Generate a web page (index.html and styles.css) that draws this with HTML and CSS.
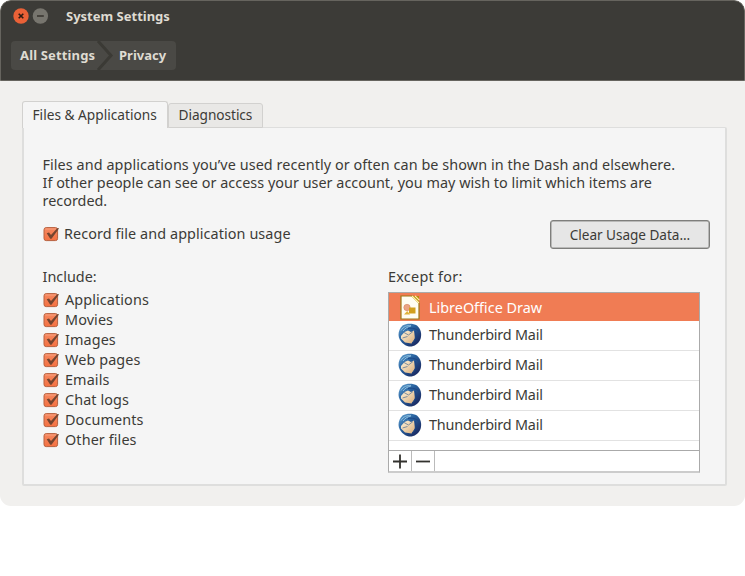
FILE: index.html
```html
<!DOCTYPE html>
<html lang="en">
<head>
<meta charset="utf-8">
<title>System Settings</title>
<link rel="stylesheet" href="styles.css">
</head>
<body>
<svg class="defs" aria-hidden="true">
  <defs>
    <linearGradient id="box" x1="0" y1="0" x2="0" y2="1"><stop offset="0" stop-color="#f58860"/><stop offset="1" stop-color="#f47142"/></linearGradient>
    <linearGradient id="globe" x1="0" y1="0" x2="1" y2="1"><stop offset="0" stop-color="#6aa9d6"/><stop offset=".4" stop-color="#27619f"/><stop offset="1" stop-color="#171b50"/></linearGradient>
    <linearGradient id="mail" x1="0" y1="0" x2="1" y2="1"><stop offset="0" stop-color="#fff3d8"/><stop offset="1" stop-color="#d9ae7c"/></linearGradient>
    <symbol id="check" viewBox="0 0 17 16">
      <rect x="1" y="1.6" width="13.6" height="13" rx="2.2" fill="url(#box)" stroke="#b7613f"/>
      <path d="M2.2 3h11.2" stroke="#f9a587" stroke-width=".8"/>
      <path d="M3.7 7.3 6 6.4l2 2.7 6.2-6.8 2-.1-7.7 10.5-1.3.1z" fill="#74442f"/>
    </symbol>
    <symbol id="bird" viewBox="0 0 24 24">
      <path d="M4.500 2.500C9 0 15 .2 19 2.500c4 3.500 5 8.500 3.500 13.500-2 5-7 8-11.500 7.500C6 22.500 1 18 .5 12 .5 8 2 5 4.500 2.500z" fill="url(#globe)"/>
      <path d="M3 13 6.500 9l3.500-1.500 3 1.500 3-1.500 1 8.500-3.500 4.500-6.500-1-4-4z" fill="url(#mail)"/>
      <path d="M6 9.500 10.500 12l4.500-3.500M4.500 15l5-1.500" fill="none" stroke="#7c8da0" stroke-width="1"/>
      <path d="M3 7.500C5.500 3.500 9 2.200 13 2.800 9 4 7 5.500 5 8" fill="none" stroke="#8fc0e0" stroke-width="1"/>
      <path d="M10 5.500c4-1 8 0 11 3M17 8c1.500 4 1 8-3 12" fill="none" stroke="#1c4585" stroke-width="1"/>
    </symbol>
    <symbol id="draw" viewBox="0 0 22 26">
      <path d="M2 1h12l6 6v17H2z" fill="#fffdf2" stroke="#9c7816" stroke-width="1.2"/>
      <path d="M12 1h8v8z" fill="#b98c0d"/><path d="m13 1 7 7M16 .8l4.3 4.4" stroke="#fff2ae" stroke-width="1.2"/>
      <circle cx="8" cy="12.5" r="3.2" fill="#eba483" stroke="#d48563" stroke-width=".6"/>
      <path d="M10 12.5h6.500v6H10z" fill="#d2a01e"/><path d="m5 19.500 3.200-3.500 3 3.500z" fill="#dfb43b"/>
    </symbol>
  </defs>
</svg>
<div class="window">
  <header class="header">
    <div class="titlebar">
      <svg class="controls" viewBox="0 0 36 16"><circle cx="8" cy="8" r="7.7" fill="#ea6137"/><path d="m5.7 5.7 4.6 4.600m0-4.600-4.600 4.600" stroke="#2c1a12" stroke-width="1.6"/><circle cx="27.4" cy="8" r="7.7" fill="#77756e"/><path d="M24 8h6.800" stroke="#34322d" stroke-width="1.4"/></svg>
      <span class="title">System Settings</span>
    </div>
    <nav class="crumbs">
      <span class="crumb all">All Settings</span>
      <svg class="arrow" viewBox="0 0 20 29"><path d="M2 0 15 14.500 2 29" fill="none" stroke="#3b3a35" stroke-width="3"/></svg>
      <span class="crumb privacy">Privacy</span>
    </nav>
  </header>
  <main class="content">
    <div class="tabs"><div class="tab active">Files &amp; Applications</div><div class="tab">Diagnostics</div></div>
    <section class="panel">
      <p class="intro"><span class="lead">Files and applications you’ve used recently or often can be shown in the Dash and elsewhere.</span><br><span class="detail">If other people can see or access your user account, you may wish to limit which items are</span><br>recorded.</p>
      <div class="record"><label class="option"><svg class="check"><use href="#check"/></svg><span>Record file and application usage</span></label><button class="clear">Clear Usage Data...</button></div>
      <div class="columns">
        <div class="include">
          <h2>Include:</h2>
          <div class="option"><svg class="check"><use href="#check"/></svg><span>Applications</span></div>
          <div class="option"><svg class="check"><use href="#check"/></svg><span>Movies</span></div>
          <div class="option"><svg class="check"><use href="#check"/></svg><span>Images</span></div>
          <div class="option"><svg class="check"><use href="#check"/></svg><span>Web pages</span></div>
          <div class="option"><svg class="check"><use href="#check"/></svg><span>Emails</span></div>
          <div class="option"><svg class="check"><use href="#check"/></svg><span>Chat logs</span></div>
          <div class="option"><svg class="check"><use href="#check"/></svg><span>Documents</span></div>
          <div class="option"><svg class="check"><use href="#check"/></svg><span>Other files</span></div>
        </div>
        <div class="except">
          <h2>Except for:</h2>
          <div class="list">
            <div class="row selected"><svg class="app doc"><use href="#draw"/></svg><span>LibreOffice Draw</span></div>
            <div class="row"><svg class="app"><use href="#bird"/></svg><span>Thunderbird Mail</span></div>
            <div class="row"><svg class="app"><use href="#bird"/></svg><span>Thunderbird Mail</span></div>
            <div class="row"><svg class="app"><use href="#bird"/></svg><span>Thunderbird Mail</span></div>
            <div class="row"><svg class="app"><use href="#bird"/></svg><span>Thunderbird Mail</span></div>
            <div class="spacer"></div>
            <div class="tools"><div class="tool"><svg viewBox="0 0 22 21"><path d="M4 10.500h14M11 3.500v14"/></svg></div><div class="tool"><svg viewBox="0 0 22 21"><path d="M4 10.500h14"/></svg></div></div>
          </div>
        </div>
      </div>
    </section>
  </main>
</div>
</body>
</html>
```
FILE: styles.css
```css
* { box-sizing: border-box; }
body { margin: 0; background: #fff; color: #3c3b37; font: 14.4px/18px "Noto Sans", sans-serif; white-space: nowrap; }
svg { display: block; flex: none; }
.defs { position: absolute; width: 0; height: 0; }
.window { width: 745px; height: 506px; border-radius: 11px; background: #f1f0ee; overflow: hidden; }
.header { height: 81px; background: #3c3b37; border: 1px solid #66645e; border-radius: 11px 11px 0 0; color: #dfdbd2; font-size: 13px; font-weight: 700; }
.titlebar { display: flex; align-items: center; height: 29px; padding-left: 12px; }
.controls { width: 36px; height: 16px; margin-right: 17px; }
.crumbs { display: flex; align-items: center; width: 165px; height: 29px; margin: 11px 0 0 10px; border-radius: 4px; background: #4a4945; line-height: 16px; }
.crumb { margin-top: -2px; }
.crumb.all { width: 85px; padding-left: 9px; letter-spacing: .15px; }
.arrow { width: 20px; height: 29px; }
.crumb.privacy { padding-left: 3px; }
.content { padding: 20px 18px 0 22px; }
.tabs { display: flex; align-items: flex-end; height: 27px; margin-bottom: -1px; position: relative; font-size: 13.7px; }
.tab { width: 95px; height: 25px; padding: 2px 0 0 9.5px; border: 1px solid #d2d1cf; border-radius: 3px 3px 0 0; background: #e9e8e6; letter-spacing: -.06px; }
.tab.active { width: 146px; height: 27px; border-bottom: 0; background: #f5f5f5; padding-top: 4px; letter-spacing: 0; }
.panel { width: 705px; height: 359px; border: 2px solid #dededd; border-top-width: 1px; border-radius: 0 2px 2px; background: #f5f5f5; padding: 28px 15px 0 18.5px; }
.intro { margin: 0; height: 54px; }
.lead { letter-spacing: .07px; }
.detail { letter-spacing: .022px; }
.record { display: flex; justify-content: space-between; align-items: flex-start; height: 58px; padding-top: 9px; }
.clear { width: 160px; height: 29px; margin-top: 1px; border: 1px solid #7e7e7c; border-radius: 3px; background: #e6e6e6; box-shadow: inset 0 0 0 .5px #8c8c8a; color: inherit; font: inherit; font-size: 13.6px; letter-spacing: -.04px; padding: 1px 0 0; }
.option { display: flex; align-items: center; height: 20px; letter-spacing: .1px; }
.record .option { margin-top: 5px; letter-spacing: .08px; }
.check { width: 17px; height: 16px; margin: 0 5px 0 .5px; }
.record .check { margin-right: 4px; }
.columns { display: flex; }
.include { width: 345.5px; }
h2 { margin: 0; height: 22px; font: inherit; }
.except h2 { letter-spacing: .27px; }
.list { width: 312px; height: 181px; margin-top: 2px; border: 1px solid #aaa; border-bottom: 2px solid #ccc; background: #fff; }
.row { display: flex; align-items: center; height: 30px; padding-left: 9px; border-bottom: 1px solid #e2e2e2; letter-spacing: -.2px; }
.row.selected { height: 28px; border: 0; background: #f07c54; color: #fff; letter-spacing: 0; }
.row span { position: relative; top: -1px; }
.row .app { margin-top: -2px; }
.row.selected span { top: 1px; }
.app { width: 24px; height: 24px; margin-right: 7px; }
.row .app.doc { width: 22px; height: 26px; margin: 1px 8px 0 1px; }
.spacer { height: 9px; }
.tools { display: flex; height: 21px; border-top: 1px solid #aaa; }
.tool { width: 23px; border-right: 1px solid #bbb; }
.tool svg { width: 22px; height: 21px; fill: none; stroke: #33322e; stroke-width: 1.8; }
```
